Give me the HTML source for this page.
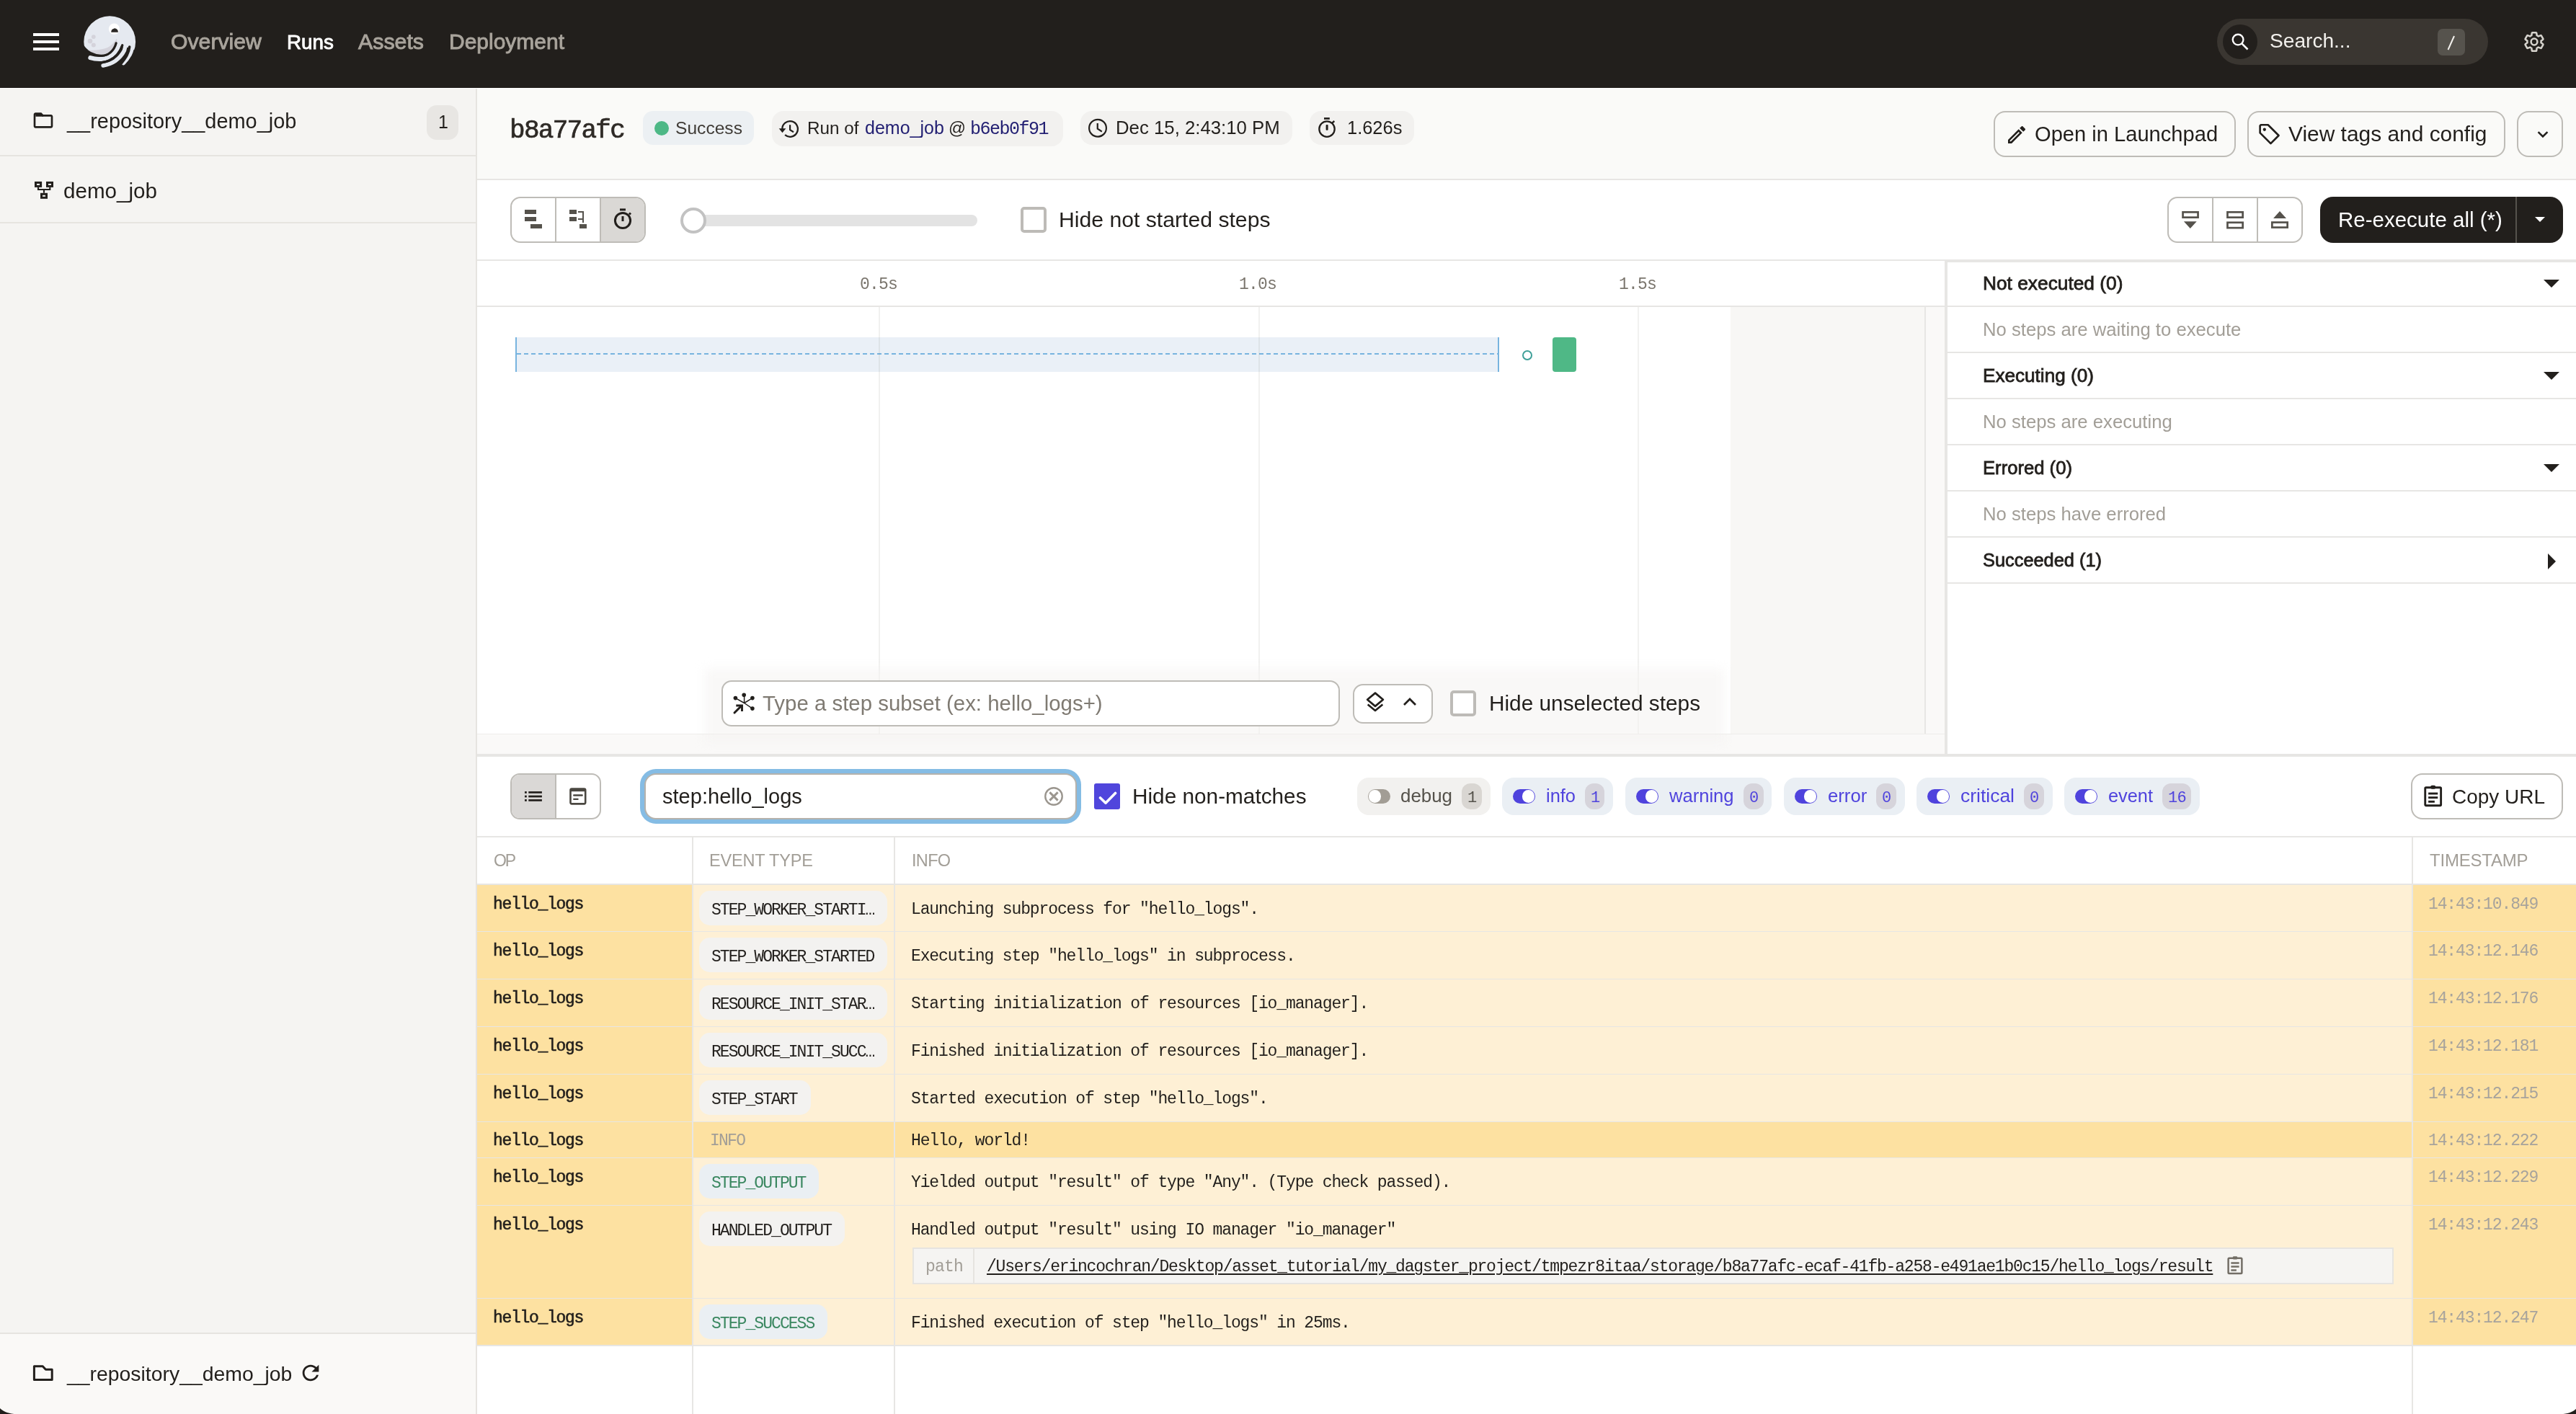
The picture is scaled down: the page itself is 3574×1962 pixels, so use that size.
<!DOCTYPE html>
<html><head><meta charset="utf-8"><title>Dagster run</title>
<style>
html,body{margin:0;padding:0;}
body{width:3574px;height:1962px;position:relative;overflow:hidden;background:#FFFFFF;font-family:"Liberation Sans", sans-serif;}
.t{position:absolute;white-space:nowrap;will-change:transform;}
.r{position:absolute;display:block;}
</style></head><body>
<div class="r" style="left:0px;top:0px;width:3574px;height:122px;background:#221F1C;"></div>
<div class="r" style="left:0px;top:122px;width:3574px;height:1px;background:#FFFFFF;"></div>
<div class="r" style="left:46px;top:46px;width:36px;height:4px;background:#FFFFFF;"></div>
<div class="r" style="left:46px;top:56px;width:36px;height:4px;background:#FFFFFF;"></div>
<div class="r" style="left:46px;top:66px;width:36px;height:4px;background:#FFFFFF;"></div>
<svg class="r" style="left:110px;top:15px;" width="85" height="85" viewBox="110 15 85 85">
<circle cx="152.2" cy="58.1" r="35.9" fill="#E5E9F0"/>
<path d="M105,63 L116.5,63 C121,70 129,74.4 139.8,75.6 C150,76.2 157.6,69 159.5,59 L168,64 L178,66 L188,70 L200,70 L200,100 L105,100 Z" fill="#221F1C"/>
<path d="M121,69 C128,70.5 140,69.5 148,66.5 C154,64 158.5,59 162,53.5 L163,62 C160,72 150,78 139,77.5 C130,77 124,73 121,70 Z" fill="#D4D3DB"/>
<path d="M125.3,80.2 C130,81.8 135,82.3 141,82 C150,81.5 156,77 160,72 C164,67 166,60 166.5,55" stroke="#E5E9F0" stroke-width="6" fill="none" stroke-linecap="round"/>
<path d="M143.1,91 C149,90 155,88 160,84.5 C166,80 170,75 172.5,70 C174,66 175,60 175,55" stroke="#E5E9F0" stroke-width="5.5" fill="none" stroke-linecap="round"/>
<path d="M171.3,87.6 C174.5,84.5 177.5,80.5 180,76 C182.5,71 184,66 184.5,58" stroke="#E5E9F0" stroke-width="5.6" fill="none" stroke-linecap="round"/>
<path d="M113,63.5 C120,71.5 128,76.6 139.8,77.3 C150,77.9 158.5,70 161.1,59.8" stroke="#221F1C" stroke-width="3.2" fill="none" stroke-linecap="round"/>
<path d="M128,88.5 C136,87.8 145,86.5 151,84 C160,80.5 166,74 169.8,62.8" stroke="#221F1C" stroke-width="3.3" fill="none" stroke-linecap="round"/>
<path d="M165,92 C170,86 174,81 176,77 C178.3,72.5 179.5,68 179.7,64.9" stroke="#221F1C" stroke-width="3.5" fill="none" stroke-linecap="round"/>
<circle cx="129.8" cy="51.1" r="2.9" fill="#D4D3DB"/><circle cx="125" cy="57.1" r="3.3" fill="#D4D3DB"/><circle cx="129.8" cy="62.5" r="3" fill="#D4D3DB"/>
<circle cx="158.4" cy="40.1" r="7.6" fill="#FFFFFF"/>
<path d="M154.3,44.8 A4.8,4.8 0 1,1 163.8,44.8 Z" fill="#2A2725"/>
<circle cx="156.4" cy="38.8" r="1.5" fill="#FFFFFF"/>
</svg>
<div class="t " style="left:237.00px;top:41.00px;font-size:30.22px;line-height:33px;font-family:'Liberation Sans', sans-serif;font-weight:normal;color:#A9A49C;-webkit-text-stroke:0.9px #A9A49C;">Overview</div>
<div class="t " style="left:398.00px;top:43.00px;font-size:27.84px;line-height:31px;font-family:'Liberation Sans', sans-serif;font-weight:normal;color:#FFFFFF;-webkit-text-stroke:0.9px #FFFFFF;">Runs</div>
<div class="t " style="left:497.00px;top:41.00px;font-size:30.33px;line-height:33px;font-family:'Liberation Sans', sans-serif;font-weight:normal;color:#A9A49C;-webkit-text-stroke:0.9px #A9A49C;">Assets</div>
<div class="t " style="left:623.00px;top:41.00px;font-size:29.99px;line-height:33px;font-family:'Liberation Sans', sans-serif;font-weight:normal;color:#A9A49C;-webkit-text-stroke:0.9px #A9A49C;">Deployment</div>
<div class="r" style="left:3076px;top:26px;width:376px;height:64px;background:#3A3631;border-radius:32px;"></div>
<div class="r" style="left:3084px;top:34px;width:48px;height:48px;background:#221F1C;border-radius:24px;"></div>
<svg class="r" style="left:3094px;top:44px;" width="28" height="28" viewBox="0 0 24 24"><circle cx="9.5" cy="9.5" r="6.3" stroke="#FFF" stroke-width="2" fill="none"/><path d="M14 14 L21 21" stroke="#FFF" stroke-width="2.2"/></svg>
<div class="t " style="left:3149.00px;top:41.00px;font-size:28.11px;line-height:31px;font-family:'Liberation Sans', sans-serif;font-weight:normal;color:#F2F0EC;">Search...</div>
<div class="r" style="left:3382px;top:40px;width:38px;height:37px;background:#56534D;border-radius:7px;"></div>
<svg class="r" style="left:3390px;top:45px;" width="20" height="30" viewBox="3390 45 20 30"><path d="M3405,50 L3396.5,69" stroke="#F2F0EC" stroke-width="2"/></svg>
<svg class="r" style="left:3500px;top:42px;" width="32" height="32" viewBox="0 0 24 24"><path fill="none" stroke="#D6D3CD" stroke-width="1.9" d="M19.14,12.94c0.04-0.3,0.06-0.61,0.06-0.94c0-0.32-0.02-0.64-0.07-0.94l2.03-1.58c0.18-0.14,0.23-0.41,0.12-0.61 l-1.92-3.32c-0.12-0.22-0.37-0.29-0.59-0.22l-2.39,0.96c-0.5-0.38-1.03-0.7-1.62-0.94L14.4,2.81c-0.04-0.24-0.24-0.41-0.48-0.41 h-3.84c-0.24,0-0.43,0.17-0.47,0.41L9.25,5.35C8.66,5.59,8.12,5.92,7.63,6.29L5.24,5.33c-0.22-0.08-0.47,0-0.59,0.22L2.74,8.87 C2.62,9.08,2.66,9.34,2.86,9.48l2.03,1.58C4.84,11.36,4.8,11.69,4.8,12s0.02,0.64,0.07,0.94l-2.03,1.58 c-0.18,0.14-0.23,0.41-0.12,0.61l1.92,3.32c0.12,0.22,0.37,0.29,0.59,0.22l2.39-0.96c0.5,0.38,1.03,0.7,1.62,0.94l0.36,2.54 c0.05,0.24,0.24,0.41,0.48,0.41h3.84c0.24,0,0.44-0.17,0.47-0.41l0.36-2.54c0.59-0.24,1.13-0.56,1.62-0.94l2.39,0.96 c0.22,0.08,0.47,0,0.59-0.22l1.92-3.32c0.12-0.22,0.07-0.47-0.12-0.61L19.14,12.94z"/><circle cx="12" cy="12" r="3.3" fill="none" stroke="#D6D3CD" stroke-width="1.9"/></svg>
<div class="r" style="left:0px;top:123px;width:660px;height:1839px;background:#F5F4F2;"></div>
<div class="r" style="left:660px;top:123px;width:2px;height:1839px;background:#E6E4E0;"></div>
<svg class="r" style="left:43.5px;top:151px;" width="32" height="32" viewBox="0 0 24 24"><path fill="#221F1C" d="M9.17 6l2 2H20v10H4V6h5.17M10 4H4c-1.1 0-1.99.9-1.99 2L2 18c0 1.1.9 2 2 2h16c1.1 0 2-.9 2-2V8c0-1.1-.9-2-2-2h-8l-2-2z"/><path fill="#221F1C" d="M4 5h6l2 2v1H4z"/></svg>
<div class="t " style="left:92.50px;top:152.00px;font-size:28.93px;line-height:32px;font-family:'Liberation Sans', sans-serif;font-weight:normal;color:#221F1C;">__repository__demo_job</div>
<div class="r" style="left:592px;top:146px;width:44px;height:48px;background:#E8E6E3;border-radius:14px;"></div>
<div class="t " style="left:608.00px;top:155.00px;font-size:25px;line-height:28px;font-family:'Liberation Sans', sans-serif;font-weight:normal;color:#221F1C;">1</div>
<div class="r" style="left:0px;top:215px;width:660px;height:2px;background:#E6E4E0;"></div>
<svg class="r" style="left:44px;top:248px;" width="34" height="32" viewBox="44 248 34 32"><g fill="none" stroke="#221F1C"><rect x="49.5" y="253.4" width="7.1" height="5" stroke-width="3"/><rect x="65.5" y="253.4" width="7" height="5" stroke-width="3"/><rect x="57.5" y="269.3" width="7" height="5" stroke-width="3"/><path d="M53,259.9 V263 H69.3 V259.9 M61,263 V267.8" stroke-width="2.1"/></g></svg>
<div class="t " style="left:88.00px;top:248.00px;font-size:29.6px;line-height:33px;font-family:'Liberation Sans', sans-serif;font-weight:normal;color:#221F1C;">demo_job</div>
<div class="r" style="left:0px;top:308px;width:660px;height:2px;background:#E6E4E0;"></div>
<div class="r" style="left:0px;top:1850px;width:660px;height:112px;background:#FAF9F7;"></div>
<div class="r" style="left:0px;top:1849px;width:660px;height:2px;background:#E6E4E0;"></div>
<svg class="r" style="left:40px;top:1888px;" width="40" height="34" viewBox="40 1888 40 34"><path d="M47.4,1895.7 H59.2 L63.4,1900.2 H72.2 V1914.4 H47.4 Z" fill="none" stroke="#221F1C" stroke-width="3" stroke-linejoin="round"/></svg>
<div class="t " style="left:92.50px;top:1890.00px;font-size:28.39px;line-height:32px;font-family:'Liberation Sans', sans-serif;font-weight:normal;color:#221F1C;">__repository__demo_job</div>
<svg class="r" style="left:414px;top:1888px;" width="34" height="34" viewBox="0 0 24 24"><path fill="#221F1C" d="M17.65 6.35C16.2 4.9 14.21 4 12 4c-4.42 0-7.99 3.58-7.99 8s3.57 8 7.99 8c3.73 0 6.84-2.55 7.73-6h-2.08c-.82 2.33-3.04 4-5.65 4-3.31 0-6-2.69-6-6s2.69-6 6-6c1.66 0 3.14.69 4.22 1.78L13 11h7V4l-2.35 2.35z"/></svg>
<div class="r" style="left:662px;top:123px;width:2912px;height:125px;background:#FAFAF8;"></div>
<div class="r" style="left:662px;top:248px;width:2912px;height:2px;background:#E7E6E4;"></div>
<div class="t " style="left:707.00px;top:161.00px;font-size:36px;line-height:41px;font-family:'Liberation Mono', monospace;font-weight:normal;color:#2E2A26;letter-spacing:-1.72px;-webkit-text-stroke:0.7px #2E2A26;">b8a77afc</div>
<div class="r" style="left:892px;top:154px;width:154px;height:47px;background:#ECF0F3;border-radius:14px;"></div>
<div class="r" style="left:908px;top:168px;width:20px;height:20px;background:#4DB886;border-radius:10px;"></div>
<div class="t " style="left:937.00px;top:164.00px;font-size:24.6px;line-height:27px;font-family:'Liberation Sans', sans-serif;font-weight:normal;color:#3F3B36;">Success</div>
<div class="r" style="left:1071px;top:154px;width:404px;height:49px;background:#F2F1EF;border-radius:16px;"></div>
<svg class="r" style="left:1076px;top:160px;" width="36" height="36" viewBox="1076 160 36 36"><path d="M1085.3,178.9 A10.8,10.8 0 1 1 1089.1,187.2" fill="none" stroke="#221F1C" stroke-width="2.3"/><path d="M1080.7,178.3 L1090.4,178.3 L1085.5,184.2 Z" fill="#221F1C"/><path d="M1096.1,173.3 V180.2 L1101,183.2" fill="none" stroke="#221F1C" stroke-width="2.2"/></svg>
<div class="t " style="left:1120.00px;top:164.00px;font-size:24.26px;line-height:27px;font-family:'Liberation Sans', sans-serif;font-weight:normal;color:#221F1C;">Run of</div>
<div class="t " style="left:1200.00px;top:163.00px;font-size:25.04px;line-height:28px;font-family:'Liberation Sans', sans-serif;font-weight:normal;color:#221F72;">demo_job</div>
<div class="t " style="left:1316.00px;top:165.00px;font-size:23.65px;line-height:26px;font-family:'Liberation Sans', sans-serif;font-weight:normal;color:#221F1C;">@</div>
<div class="t " style="left:1346.00px;top:165.00px;font-size:25px;line-height:29px;font-family:'Liberation Mono', monospace;font-weight:normal;color:#221F72;letter-spacing:-1.5px;">b6eb0f91</div>
<div class="r" style="left:1499px;top:154px;width:294px;height:47px;background:#F2F1EF;border-radius:16px;"></div>
<svg class="r" style="left:1506px;top:161px;" width="34" height="34" viewBox="1506 161 34 34"><circle cx="1523" cy="177.7" r="11.9" fill="none" stroke="#221F1C" stroke-width="2.2"/><path d="M1522.75,171 V178.6 L1528.8,182.6" fill="none" stroke="#221F1C" stroke-width="2.2"/></svg>
<div class="t " style="left:1548.00px;top:163.00px;font-size:25.77px;line-height:28px;font-family:'Liberation Sans', sans-serif;font-weight:normal;color:#221F1C;">Dec 15, 2:43:10 PM</div>
<div class="r" style="left:1817px;top:154px;width:145px;height:47px;background:#F2F1EF;border-radius:16px;"></div>
<svg class="r" style="left:1826px;top:160px;" width="30" height="34" viewBox="1826 160 30 34"><circle cx="1841" cy="179.1" r="10.7" fill="none" stroke="#221F1C" stroke-width="2.3"/><rect x="1837" y="163.1" width="7.8" height="2.7" fill="#221F1C"/><rect x="1839.6" y="173.1" width="3" height="7.7" rx="1" fill="#221F1C"/><path d="M1848.3,170.6 L1851.3,168" stroke="#221F1C" stroke-width="2.4"/></svg>
<div class="t " style="left:1869.00px;top:163.00px;font-size:25.45px;line-height:28px;font-family:'Liberation Sans', sans-serif;font-weight:normal;color:#221F1C;">1.626s</div>
<div class="r" style="left:2766px;top:154px;width:336px;height:64px;background:#FFFFFF;border:2px solid #BEBCB7;box-sizing:border-box;border-radius:16px;background:transparent;"></div>
<svg class="r" style="left:2782px;top:171px;" width="32" height="32" viewBox="0 0 24 24"><path fill="#221F1C" d="M3 17.25V21h3.75L17.81 9.94l-3.75-3.75L3 17.25zM5.92 19H5v-.92l9.06-9.06.92.92L5.92 19zM20.71 5.63l-2.34-2.34c-.2-.2-.45-.29-.71-.29s-.51.1-.7.29l-1.83 1.83 3.75 3.75 1.83-1.83c.39-.39.39-1.02 0-1.41z"/></svg>
<div class="t " style="left:2822.50px;top:170.00px;font-size:29.12px;line-height:32px;font-family:'Liberation Sans', sans-serif;font-weight:normal;color:#221F1C;">Open in Launchpad</div>
<div class="r" style="left:3118px;top:154px;width:358px;height:64px;border:2px solid #BEBCB7;box-sizing:border-box;border-radius:16px;"></div>
<svg class="r" style="left:3131px;top:168px;" width="37" height="37" viewBox="0 0 24 24"><g fill="none" stroke="#221F1C" stroke-width="1.7" stroke-linejoin="round"><path d="M3 4.2V10.6L12.6 20.2L19.8 13L10.2 3.4H3.8Z"/></g><circle cx="7" cy="7.6" r="1.4" fill="#221F1C"/></svg>
<div class="t " style="left:3175.00px;top:169.00px;font-size:29.92px;line-height:33px;font-family:'Liberation Sans', sans-serif;font-weight:normal;color:#221F1C;">View tags and config</div>
<div class="r" style="left:3492px;top:154px;width:64px;height:64px;border:2px solid #BEBCB7;box-sizing:border-box;border-radius:16px;"></div>
<svg class="r" style="left:3514px;top:172px;" width="28" height="28" viewBox="0 0 24 24"><path d="M6.5 9.5L12 15L17.5 9.5" fill="none" stroke="#221F1C" stroke-width="2.2"/></svg>
<div class="r" style="left:662px;top:250px;width:2912px;height:110px;background:#FFFFFF;"></div>
<div class="r" style="left:662px;top:360px;width:2912px;height:2px;background:#E7E6E4;"></div>
<div class="r" style="left:708px;top:273px;width:188px;height:64px;border:2px solid #BEBCB7;box-sizing:border-box;border-radius:14px;"></div>
<div class="r" style="left:833px;top:275px;width:61px;height:60px;background:#DAD8D5;border-radius:0 12px 12px 0;"></div>
<div class="r" style="left:770px;top:275px;width:2px;height:60px;background:#BEBCB7;"></div>
<div class="r" style="left:832px;top:275px;width:2px;height:60px;background:#BEBCB7;"></div>
<div class="r" style="left:728px;top:291px;width:16px;height:6px;background:#55524C;"></div>
<div class="r" style="left:728px;top:301px;width:16px;height:6px;background:#55524C;"></div>
<div class="r" style="left:736px;top:311px;width:16px;height:6px;background:#55524C;"></div>
<div class="r" style="left:790px;top:291px;width:10px;height:6px;background:#55524C;"></div>
<div class="r" style="left:790px;top:301px;width:10px;height:6px;background:#55524C;"></div>
<div class="r" style="left:804px;top:311px;width:10px;height:6px;background:#55524C;"></div>
<svg class="r" style="left:800px;top:290px;" width="14" height="22" viewBox="0 0 14 22"><path d="M2 4H9V19M2 14H9" fill="none" stroke="#55524C" stroke-width="2"/></svg>
<svg class="r" style="left:850px;top:288px;" width="30" height="32" viewBox="0 0 30 32"><g fill="none" stroke="#221F1C" stroke-width="3"><circle cx="14" cy="18" r="10.6"/><path d="M10 2.9H18"/><path d="M14 12V19"/><path d="M23 9.5L25 7.5"/></g></svg>
<div class="r" style="left:947px;top:298px;width:409px;height:16px;background:#E3E3E3;border-radius:8px;"></div>
<div class="r" style="left:944px;top:288px;width:36px;height:36px;background:#FFFFFF;border:4px solid #C2C2C2;box-sizing:border-box;border-radius:18px;"></div>
<div class="r" style="left:1416px;top:287px;width:36px;height:36px;background:#FFFFFF;border:4px solid #BDBBB7;box-sizing:border-box;border-radius:5px;"></div>
<div class="t " style="left:1469.00px;top:288.00px;font-size:30.18px;line-height:33px;font-family:'Liberation Sans', sans-serif;font-weight:normal;color:#221F1C;">Hide not started steps</div>
<div class="r" style="left:3007px;top:273px;width:188px;height:64px;border:2px solid #BEBCB7;box-sizing:border-box;border-radius:14px;"></div>
<div class="r" style="left:3069px;top:275px;width:2px;height:60px;background:#BEBCB7;"></div>
<div class="r" style="left:3131px;top:275px;width:2px;height:60px;background:#BEBCB7;"></div>
<svg class="r" style="left:3020px;top:285px;" width="165" height="40" viewBox="3020 285 165 40"><g fill="none" stroke="#55524C" stroke-width="2.7"><rect x="3028.55" y="294.35" width="21" height="7.3"/><rect x="3090.45" y="294.35" width="21.2" height="7.3"/><rect x="3090.45" y="308.75" width="21.2" height="7.4"/><rect x="3152.35" y="308.55" width="21.3" height="7.0"/></g><path d="M3029.9,307.2 H3047.7 L3038.8,316.9 Z M3154.1,303 H3172 L3163,293 Z" fill="#55524C"/></svg>
<div class="r" style="left:3219px;top:273px;width:337px;height:64px;background:#221F1C;border-radius:18px;"></div>
<div class="r" style="left:3490px;top:273px;width:2px;height:64px;background:#55524C;"></div>
<div class="t " style="left:3244.00px;top:288.00px;font-size:29.51px;line-height:33px;font-family:'Liberation Sans', sans-serif;font-weight:normal;color:#FFFFFF;">Re-execute all (*)</div>
<svg class="r" style="left:3514px;top:298px;" width="20" height="14" viewBox="0 0 20 14"><path d="M3 3H17L10 10Z" fill="#FFFFFF"/></svg>
<div class="r" style="left:662px;top:362px;width:2036px;height:657px;background:#FFFFFF;"></div>
<div class="r" style="left:662px;top:424px;width:2036px;height:2px;background:#E7E6E4;"></div>
<div class="t " style="left:1193.00px;top:382.00px;font-size:23px;line-height:26px;font-family:'Liberation Mono', monospace;font-weight:normal;color:#7A756D;letter-spacing:-0.8px;">0.5s</div>
<div class="t " style="left:1719.00px;top:382.00px;font-size:23px;line-height:26px;font-family:'Liberation Mono', monospace;font-weight:normal;color:#7A756D;letter-spacing:-0.8px;">1.0s</div>
<div class="t " style="left:2246.00px;top:382.00px;font-size:23px;line-height:26px;font-family:'Liberation Mono', monospace;font-weight:normal;color:#7A756D;letter-spacing:-0.8px;">1.5s</div>
<div class="r" style="left:2401px;top:426px;width:270px;height:593px;background:#F8F7F5;"></div>
<div class="r" style="left:2670px;top:426px;width:2px;height:593px;background:#E7E6E4;"></div>
<div class="r" style="left:2672px;top:426px;width:26px;height:593px;background:#FAF9F8;"></div>
<div class="r" style="left:662px;top:1018px;width:2036px;height:1px;background:#EEEDEB;"></div>
<div class="r" style="left:662px;top:1019px;width:2036px;height:27px;background:#FAF9F8;"></div>
<div class="r" style="left:715px;top:468px;width:1365px;height:48px;background:#EAF0F7;"></div>
<div class="r" style="left:715px;top:468px;width:2px;height:48px;background:#78B4DF;"></div>
<div class="r" style="left:2078px;top:468px;width:2px;height:48px;background:#78B4DF;"></div>
<div class="r" style="left:717px;top:490px;width:1361px;height:2px;background:repeating-linear-gradient(90deg,#78B4DF 0 6px,transparent 6px 10px);"></div>
<div class="r" style="left:2112px;top:486px;width:14px;height:14px;border:2.5px solid #3E9F98;box-sizing:border-box;border-radius:7px;"></div>
<div class="r" style="left:2154px;top:468px;width:33px;height:48px;background:#4FB886;border-radius:4px;"></div>
<div class="r" style="left:1219px;top:426px;width:1.5px;height:593px;background:rgba(60,50,40,0.07);"></div>
<div class="r" style="left:1746px;top:426px;width:1.5px;height:593px;background:rgba(60,50,40,0.07);"></div>
<div class="r" style="left:2272px;top:426px;width:1.5px;height:593px;background:rgba(60,50,40,0.07);"></div>
<div class="r" style="left:978px;top:928px;width:1414px;height:102px;background:rgba(244,243,240,0.55);filter:blur(7px);"></div>
<div class="r" style="left:662px;top:1018px;width:2036px;height:1px;background:#EEEDEB;"></div>
<div class="r" style="left:1001px;top:944px;width:858px;height:64px;background:#FFFFFF;border:2px solid #BEBCB7;box-sizing:border-box;border-radius:14px;"></div>
<svg class="r" style="left:1010px;top:955px;" width="45" height="45" viewBox="1010 955 45 45"><g stroke="#221F1C" stroke-width="1.5" fill="none"><path d="M1032.6,975.5 V964.3 M1032.6,975.5 L1020.4,968.6 M1032.6,975.5 L1043.9,968.6 M1032.6,975.5 L1043.9,983.1"/></g><g fill="#221F1C"><circle cx="1032.2" cy="964.3" r="2.8"/><circle cx="1020.4" cy="968.6" r="2.8"/><circle cx="1043.9" cy="968.6" r="2.8"/><circle cx="1043.9" cy="983.1" r="2.8"/></g><path d="M1019,989 L1028.3,979.7" stroke="#221F1C" stroke-width="3" stroke-linecap="round"/><path d="M1021.3,979 H1029.5 V987" fill="none" stroke="#221F1C" stroke-width="2.9"/></svg>
<div class="t " style="left:1058.00px;top:959.00px;font-size:29.41px;line-height:33px;font-family:'Liberation Sans', sans-serif;font-weight:normal;color:#7F7A72;">Type a step subset (ex: hello_logs+)</div>
<div class="r" style="left:1877px;top:949px;width:111px;height:55px;background:#FFFFFF;border:2px solid #BEBCB7;box-sizing:border-box;border-radius:14px;"></div>
<svg class="r" style="left:1893px;top:958px;" width="30" height="34" viewBox="0 0 24 28"><path d="M12 3L21 10.5L12 18L3 10.5Z" fill="none" stroke="#221F1C" stroke-width="2.2" stroke-linejoin="round"/><path d="M3.5 16L12 23L20.5 16" fill="none" stroke="#221F1C" stroke-width="2.2" stroke-linejoin="round"/></svg>
<svg class="r" style="left:1944px;top:964px;" width="24" height="20" viewBox="0 0 24 20"><path d="M4 14L12 6L20 14" fill="none" stroke="#221F1C" stroke-width="2.8"/></svg>
<div class="r" style="left:2012px;top:958px;width:36px;height:36px;background:#FFFFFF;border:4px solid #BDBBB7;box-sizing:border-box;border-radius:5px;"></div>
<div class="t " style="left:2065.50px;top:959.00px;font-size:29.79px;line-height:33px;font-family:'Liberation Sans', sans-serif;font-weight:normal;color:#221F1C;">Hide unselected steps</div>
<div class="r" style="left:2698px;top:362px;width:876px;height:684px;background:#FFFFFF;"></div>
<div class="r" style="left:2698px;top:362px;width:4px;height:684px;background:#E7E6E4;"></div>
<div class="r" style="left:2698px;top:361px;width:876px;height:3px;background:#E7E6E4;"></div>
<div class="t " style="left:2750.50px;top:378.00px;font-size:26.31px;line-height:30px;font-family:'Liberation Sans', sans-serif;font-weight:normal;color:#221F1C;-webkit-text-stroke:0.8px #221F1C;">Not executed (0)</div>
<svg class="r" style="left:3526px;top:384px;" width="28" height="20" viewBox="0 0 28 20"><path d="M3 4H25L14 15Z" fill="#221F1C"/></svg>
<div class="r" style="left:2702px;top:424px;width:872px;height:2px;background:#E7E6E4;"></div>
<div class="t " style="left:2750.50px;top:443.00px;font-size:25.7px;line-height:28px;font-family:'Liberation Sans', sans-serif;font-weight:normal;color:#A29E97;">No steps are waiting to execute</div>
<div class="r" style="left:2702px;top:488px;width:872px;height:2px;background:#E7E6E4;"></div>
<div class="t " style="left:2750.50px;top:506.00px;font-size:26.13px;line-height:30px;font-family:'Liberation Sans', sans-serif;font-weight:normal;color:#221F1C;-webkit-text-stroke:0.8px #221F1C;">Executing (0)</div>
<svg class="r" style="left:3526px;top:512px;" width="28" height="20" viewBox="0 0 28 20"><path d="M3 4H25L14 15Z" fill="#221F1C"/></svg>
<div class="r" style="left:2702px;top:552px;width:872px;height:2px;background:#E7E6E4;"></div>
<div class="t " style="left:2750.50px;top:571.00px;font-size:25.7px;line-height:28px;font-family:'Liberation Sans', sans-serif;font-weight:normal;color:#A29E97;">No steps are executing</div>
<div class="r" style="left:2702px;top:616px;width:872px;height:2px;background:#E7E6E4;"></div>
<div class="t " style="left:2750.50px;top:635.00px;font-size:25.65px;line-height:28px;font-family:'Liberation Sans', sans-serif;font-weight:normal;color:#221F1C;-webkit-text-stroke:0.8px #221F1C;">Errored (0)</div>
<svg class="r" style="left:3526px;top:640px;" width="28" height="20" viewBox="0 0 28 20"><path d="M3 4H25L14 15Z" fill="#221F1C"/></svg>
<div class="r" style="left:2702px;top:680px;width:872px;height:2px;background:#E7E6E4;"></div>
<div class="t " style="left:2750.50px;top:699.00px;font-size:25.7px;line-height:28px;font-family:'Liberation Sans', sans-serif;font-weight:normal;color:#A29E97;">No steps have errored</div>
<div class="r" style="left:2702px;top:744px;width:872px;height:2px;background:#E7E6E4;"></div>
<div class="t " style="left:2750.50px;top:763.00px;font-size:25.37px;line-height:28px;font-family:'Liberation Sans', sans-serif;font-weight:normal;color:#221F1C;-webkit-text-stroke:0.8px #221F1C;">Succeeded (1)</div>
<svg class="r" style="left:3530px;top:765px;" width="20" height="28" viewBox="0 0 20 28"><path d="M5 3V25L16 14Z" fill="#221F1C"/></svg>
<div class="r" style="left:2702px;top:808px;width:872px;height:2px;background:#E7E6E4;"></div>
<div class="r" style="left:662px;top:1046px;width:2912px;height:4px;background:#E7E6E4;"></div>
<div class="r" style="left:662px;top:1050px;width:2912px;height:110px;background:#FFFFFF;"></div>
<div class="r" style="left:708px;top:1073px;width:126px;height:64px;border:2px solid #BEBCB7;box-sizing:border-box;border-radius:13px;"></div>
<div class="r" style="left:710px;top:1075px;width:61px;height:60px;background:#DAD8D6;border-radius:11px 0 0 11px;"></div>
<div class="r" style="left:770px;top:1075px;width:2px;height:60px;background:#BEBCB7;"></div>
<svg class="r" style="left:720px;top:1085px;" width="100" height="40" viewBox="720 1085 100 40"><g fill="#221F1C"><rect x="728" y="1098.1" width="2.8" height="2.7"/><rect x="733.3" y="1098.1" width="18.6" height="2.7"/><rect x="728" y="1103.7" width="2.8" height="2.7"/><rect x="733.3" y="1103.7" width="18.6" height="2.7"/><rect x="728" y="1109.1" width="2.8" height="2.7"/><rect x="733.3" y="1109.1" width="18.6" height="2.7"/></g><rect x="791.5" y="1094.5" width="20.7" height="20.9" rx="1.8" fill="none" stroke="#4A4740" stroke-width="2.6"/><rect x="791" y="1094" width="21.7" height="4.2" fill="#4A4740"/><rect x="795.1" y="1102.3" width="13.7" height="2.4" rx="1" fill="#4A4740"/><rect x="795.1" y="1107.7" width="7.6" height="2.3" rx="1" fill="#4A4740"/></svg>
<div class="r" style="left:888px;top:1067px;width:612px;height:76px;background:#85BCE4;border-radius:22px;"></div>
<div class="r" style="left:894px;top:1073px;width:600px;height:64px;background:#FFFFFF;border:2px solid #B5B2AC;box-sizing:border-box;border-radius:16px;"></div>
<div class="t " style="left:919.00px;top:1089.00px;font-size:29.07px;line-height:32px;font-family:'Liberation Sans', sans-serif;font-weight:normal;color:#221F1C;">step:hello_logs</div>
<svg class="r" style="left:1447px;top:1090px;" width="30" height="30" viewBox="0 0 24 24"><circle cx="12" cy="12" r="9.4" fill="none" stroke="#9B968F" stroke-width="1.9"/><path d="M7.5 7.5L16.5 16.5M16.5 7.5L7.5 16.5" stroke="#9B968F" stroke-width="2.3"/></svg>
<div class="r" style="left:1518px;top:1087px;width:36px;height:36px;background:#5046DC;border-radius:3px;"></div>
<svg class="r" style="left:1518px;top:1087px;" width="36" height="36" viewBox="0 0 36 36"><path d="M8.5 20L16 27.2L29.5 13.5" fill="none" stroke="#FFFFFF" stroke-width="3.6" stroke-linecap="round" stroke-linejoin="round"/></svg>
<div class="t " style="left:1571.40px;top:1088.00px;font-size:29.77px;line-height:33px;font-family:'Liberation Sans', sans-serif;font-weight:normal;color:#221F1C;">Hide non-matches</div>
<div class="r" style="left:1883px;top:1079px;width:185px;height:52px;background:#F2F1EF;border-radius:16px;"></div>
<div class="r" style="left:1897.5px;top:1095px;width:31.0px;height:20px;background:#A29D95;border-radius:10px;"></div>
<div class="r" style="left:1898.5px;top:1096px;width:17.0px;height:18px;background:#FFFFFF;border-radius:9px;"></div>
<div class="t " style="left:1943.00px;top:1090.00px;font-size:25.9px;line-height:28px;font-family:'Liberation Sans', sans-serif;font-weight:normal;color:#55524B;">debug</div>
<div class="r" style="left:2028px;top:1087px;width:28px;height:36px;background:#D9D6D2;border-radius:12px;"></div>
<div class="t " style="left:2036.25px;top:1095.00px;font-size:22px;line-height:25px;font-family:'Liberation Mono', monospace;font-weight:normal;color:#55524B;letter-spacing:-0.7px;">1</div>
<div class="r" style="left:2084px;top:1079px;width:154px;height:52px;background:#EAEFF4;border-radius:16px;"></div>
<div class="r" style="left:2098.5px;top:1095px;width:31.0px;height:20px;background:#4F43DD;border-radius:10px;"></div>
<div class="r" style="left:2111.5px;top:1096px;width:17.0px;height:18px;background:#FFFFFF;border-radius:9px;"></div>
<div class="t " style="left:2144.50px;top:1090.00px;font-size:25.43px;line-height:28px;font-family:'Liberation Sans', sans-serif;font-weight:normal;color:#4F43DD;">info</div>
<div class="r" style="left:2199px;top:1087px;width:27px;height:36px;background:#D6D4DB;border-radius:12px;"></div>
<div class="t " style="left:2206.75px;top:1095.00px;font-size:22px;line-height:25px;font-family:'Liberation Mono', monospace;font-weight:normal;color:#4F43DD;letter-spacing:-0.7px;">1</div>
<div class="r" style="left:2255px;top:1079px;width:203px;height:52px;background:#EAEFF4;border-radius:16px;"></div>
<div class="r" style="left:2269.5px;top:1095px;width:31.0px;height:20px;background:#4F43DD;border-radius:10px;"></div>
<div class="r" style="left:2282.5px;top:1096px;width:17.0px;height:18px;background:#FFFFFF;border-radius:9px;"></div>
<div class="t " style="left:2316.25px;top:1090.00px;font-size:25.59px;line-height:28px;font-family:'Liberation Sans', sans-serif;font-weight:normal;color:#4F43DD;">warning</div>
<div class="r" style="left:2419px;top:1087px;width:28px;height:36px;background:#D6D4DB;border-radius:12px;"></div>
<div class="t " style="left:2427.25px;top:1095.00px;font-size:22px;line-height:25px;font-family:'Liberation Mono', monospace;font-weight:normal;color:#4F43DD;letter-spacing:-0.7px;">0</div>
<div class="r" style="left:2475px;top:1079px;width:168px;height:52px;background:#EAEFF4;border-radius:16px;"></div>
<div class="r" style="left:2489.5px;top:1095px;width:31.0px;height:20px;background:#4F43DD;border-radius:10px;"></div>
<div class="r" style="left:2502.5px;top:1096px;width:17.0px;height:18px;background:#FFFFFF;border-radius:9px;"></div>
<div class="t " style="left:2535.70px;top:1090.00px;font-size:25.7px;line-height:28px;font-family:'Liberation Sans', sans-serif;font-weight:normal;color:#4F43DD;">error</div>
<div class="r" style="left:2603px;top:1087px;width:28px;height:36px;background:#D6D4DB;border-radius:12px;"></div>
<div class="t " style="left:2611.25px;top:1095.00px;font-size:22px;line-height:25px;font-family:'Liberation Mono', monospace;font-weight:normal;color:#4F43DD;letter-spacing:-0.7px;">0</div>
<div class="r" style="left:2659px;top:1079px;width:189px;height:52px;background:#EAEFF4;border-radius:16px;"></div>
<div class="r" style="left:2673.5px;top:1095px;width:31.0px;height:20px;background:#4F43DD;border-radius:10px;"></div>
<div class="r" style="left:2686.5px;top:1096px;width:17.0px;height:18px;background:#FFFFFF;border-radius:9px;"></div>
<div class="t " style="left:2720.00px;top:1089.00px;font-size:26.48px;line-height:30px;font-family:'Liberation Sans', sans-serif;font-weight:normal;color:#4F43DD;">critical</div>
<div class="r" style="left:2808px;top:1087px;width:28px;height:36px;background:#D6D4DB;border-radius:12px;"></div>
<div class="t " style="left:2816.25px;top:1095.00px;font-size:22px;line-height:25px;font-family:'Liberation Mono', monospace;font-weight:normal;color:#4F43DD;letter-spacing:-0.7px;">0</div>
<div class="r" style="left:2864px;top:1079px;width:188px;height:52px;background:#EAEFF4;border-radius:16px;"></div>
<div class="r" style="left:2878.5px;top:1095px;width:31.0px;height:20px;background:#4F43DD;border-radius:10px;"></div>
<div class="r" style="left:2891.5px;top:1096px;width:17.0px;height:18px;background:#FFFFFF;border-radius:9px;"></div>
<div class="t " style="left:2925.00px;top:1090.00px;font-size:25.33px;line-height:28px;font-family:'Liberation Sans', sans-serif;font-weight:normal;color:#4F43DD;">event</div>
<div class="r" style="left:3000px;top:1087px;width:40px;height:36px;background:#D6D4DB;border-radius:12px;"></div>
<div class="t " style="left:3008.00px;top:1095.00px;font-size:22px;line-height:25px;font-family:'Liberation Mono', monospace;font-weight:normal;color:#4F43DD;letter-spacing:-0.7px;">16</div>
<div class="r" style="left:3345px;top:1073px;width:211px;height:64px;border:2px solid #BEBCB7;box-sizing:border-box;border-radius:16px;"></div>
<svg class="r" style="left:3361px;top:1087px;" width="30" height="34" viewBox="0 0 24 27"><g fill="none" stroke="#221F1C" stroke-width="2.3"><rect x="3" y="4.5" width="17.5" height="20" rx="1"/></g><rect x="9" y="2" width="5.5" height="4" rx="1.5" fill="#221F1C"/><g fill="#221F1C"><rect x="6.5" y="10" width="10.5" height="2.3"/><rect x="6.5" y="14.5" width="10.5" height="2.3"/><rect x="6.5" y="19" width="7" height="2.3"/></g></svg>
<div class="t " style="left:3401.80px;top:1090.00px;font-size:27.97px;line-height:31px;font-family:'Liberation Sans', sans-serif;font-weight:normal;color:#221F1C;">Copy URL</div>
<div class="r" style="left:662px;top:1160px;width:2912px;height:2px;background:#E7E6E4;"></div>
<div class="r" style="left:662px;top:1162px;width:2912px;height:800px;background:#FFFFFF;"></div>
<div class="t " style="left:685.00px;top:1181.00px;font-size:23px;line-height:26px;font-family:'Liberation Sans', sans-serif;font-weight:normal;color:#A29E97;letter-spacing:-2.25px;">OP</div>
<div class="t " style="left:984.40px;top:1181.00px;font-size:23.5px;line-height:26px;font-family:'Liberation Sans', sans-serif;font-weight:normal;color:#A29E97;letter-spacing:-0.156px;">EVENT TYPE</div>
<div class="t " style="left:1264.80px;top:1181.00px;font-size:23.5px;line-height:26px;font-family:'Liberation Sans', sans-serif;font-weight:normal;color:#A29E97;letter-spacing:-0.683px;">INFO</div>
<div class="t " style="left:3371.40px;top:1180.00px;font-size:24px;line-height:27px;font-family:'Liberation Sans', sans-serif;font-weight:normal;color:#A29E97;letter-spacing:-0.206px;">TIMESTAMP</div>
<div class="r" style="left:662px;top:1226px;width:2912px;height:2px;background:#E7E6E4;"></div>
<div class="r" style="left:662px;top:1228px;width:298px;height:65px;background:#FDE1A1;"></div>
<div class="r" style="left:962px;top:1228px;width:2384px;height:65px;background:#FEF0D5;"></div>
<div class="r" style="left:3348px;top:1228px;width:226px;height:65px;background:#FDE1A1;"></div>
<div class="r" style="left:662px;top:1292px;width:2912px;height:2px;background:#E7E6E4;"></div>
<div class="t " style="left:684.00px;top:1242.00px;font-size:23px;line-height:26px;font-family:'Liberation Mono', monospace;font-weight:normal;color:#221F1C;letter-spacing:-1.3px;-webkit-text-stroke:0.6px #221F1C;">hello_logs</div>
<div class="r" style="left:970px;top:1236px;width:261.3399999999999px;height:48px;background:#F3F2F0;border-radius:15px;"></div>
<div class="t " style="left:987.00px;top:1250.00px;font-size:23px;line-height:26px;font-family:'Liberation Mono', monospace;font-weight:normal;color:#221F1C;letter-spacing:-1.94px;">STEP_WORKER_STARTI…</div>
<div class="t " style="left:1264.00px;top:1249.00px;font-size:23px;line-height:26px;font-family:'Liberation Mono', monospace;font-weight:normal;color:#221F1C;letter-spacing:-1.12px;">Launching subprocess for "hello_logs".</div>
<div class="t " style="left:3369.00px;top:1242.00px;font-size:23px;line-height:26px;font-family:'Liberation Mono', monospace;font-weight:normal;color:#A7A39C;letter-spacing:-1.12px;">14:43:10.849</div>
<div class="r" style="left:662px;top:1293px;width:298px;height:66px;background:#FDE1A1;"></div>
<div class="r" style="left:962px;top:1293px;width:2384px;height:66px;background:#FEF0D5;"></div>
<div class="r" style="left:3348px;top:1293px;width:226px;height:66px;background:#FDE1A1;"></div>
<div class="r" style="left:662px;top:1358px;width:2912px;height:2px;background:#E7E6E4;"></div>
<div class="t " style="left:684.00px;top:1307.00px;font-size:23px;line-height:26px;font-family:'Liberation Mono', monospace;font-weight:normal;color:#221F1C;letter-spacing:-1.3px;-webkit-text-stroke:0.6px #221F1C;">hello_logs</div>
<div class="r" style="left:970px;top:1301px;width:261.3399999999999px;height:48px;background:#F3F2F0;border-radius:15px;"></div>
<div class="t " style="left:987.00px;top:1315.00px;font-size:23px;line-height:26px;font-family:'Liberation Mono', monospace;font-weight:normal;color:#221F1C;letter-spacing:-1.94px;">STEP_WORKER_STARTED</div>
<div class="t " style="left:1264.00px;top:1314.00px;font-size:23px;line-height:26px;font-family:'Liberation Mono', monospace;font-weight:normal;color:#221F1C;letter-spacing:-1.12px;">Executing step "hello_logs" in subprocess.</div>
<div class="t " style="left:3369.00px;top:1307.00px;font-size:23px;line-height:26px;font-family:'Liberation Mono', monospace;font-weight:normal;color:#A7A39C;letter-spacing:-1.12px;">14:43:12.146</div>
<div class="r" style="left:662px;top:1359px;width:298px;height:66px;background:#FDE1A1;"></div>
<div class="r" style="left:962px;top:1359px;width:2384px;height:66px;background:#FEF0D5;"></div>
<div class="r" style="left:3348px;top:1359px;width:226px;height:66px;background:#FDE1A1;"></div>
<div class="r" style="left:662px;top:1424px;width:2912px;height:2px;background:#E7E6E4;"></div>
<div class="t " style="left:684.00px;top:1373.00px;font-size:23px;line-height:26px;font-family:'Liberation Mono', monospace;font-weight:normal;color:#221F1C;letter-spacing:-1.3px;-webkit-text-stroke:0.6px #221F1C;">hello_logs</div>
<div class="r" style="left:970px;top:1367px;width:261.3399999999999px;height:48px;background:#F3F2F0;border-radius:15px;"></div>
<div class="t " style="left:987.00px;top:1381.00px;font-size:23px;line-height:26px;font-family:'Liberation Mono', monospace;font-weight:normal;color:#221F1C;letter-spacing:-1.94px;">RESOURCE_INIT_STAR…</div>
<div class="t " style="left:1264.00px;top:1380.00px;font-size:23px;line-height:26px;font-family:'Liberation Mono', monospace;font-weight:normal;color:#221F1C;letter-spacing:-1.12px;">Starting initialization of resources [io_manager].</div>
<div class="t " style="left:3369.00px;top:1373.00px;font-size:23px;line-height:26px;font-family:'Liberation Mono', monospace;font-weight:normal;color:#A7A39C;letter-spacing:-1.12px;">14:43:12.176</div>
<div class="r" style="left:662px;top:1425px;width:298px;height:66px;background:#FDE1A1;"></div>
<div class="r" style="left:962px;top:1425px;width:2384px;height:66px;background:#FEF0D5;"></div>
<div class="r" style="left:3348px;top:1425px;width:226px;height:66px;background:#FDE1A1;"></div>
<div class="r" style="left:662px;top:1490px;width:2912px;height:2px;background:#E7E6E4;"></div>
<div class="t " style="left:684.00px;top:1439.00px;font-size:23px;line-height:26px;font-family:'Liberation Mono', monospace;font-weight:normal;color:#221F1C;letter-spacing:-1.3px;-webkit-text-stroke:0.6px #221F1C;">hello_logs</div>
<div class="r" style="left:970px;top:1433px;width:261.3399999999999px;height:48px;background:#F3F2F0;border-radius:15px;"></div>
<div class="t " style="left:987.00px;top:1447.00px;font-size:23px;line-height:26px;font-family:'Liberation Mono', monospace;font-weight:normal;color:#221F1C;letter-spacing:-1.94px;">RESOURCE_INIT_SUCC…</div>
<div class="t " style="left:1264.00px;top:1446.00px;font-size:23px;line-height:26px;font-family:'Liberation Mono', monospace;font-weight:normal;color:#221F1C;letter-spacing:-1.12px;">Finished initialization of resources [io_manager].</div>
<div class="t " style="left:3369.00px;top:1439.00px;font-size:23px;line-height:26px;font-family:'Liberation Mono', monospace;font-weight:normal;color:#A7A39C;letter-spacing:-1.12px;">14:43:12.181</div>
<div class="r" style="left:662px;top:1491px;width:298px;height:66px;background:#FDE1A1;"></div>
<div class="r" style="left:962px;top:1491px;width:2384px;height:66px;background:#FEF0D5;"></div>
<div class="r" style="left:3348px;top:1491px;width:226px;height:66px;background:#FDE1A1;"></div>
<div class="r" style="left:662px;top:1556px;width:2912px;height:2px;background:#E7E6E4;"></div>
<div class="t " style="left:684.00px;top:1505.00px;font-size:23px;line-height:26px;font-family:'Liberation Mono', monospace;font-weight:normal;color:#221F1C;letter-spacing:-1.3px;-webkit-text-stroke:0.6px #221F1C;">hello_logs</div>
<div class="r" style="left:970px;top:1499px;width:154.5999999999999px;height:48px;background:#F3F2F0;border-radius:15px;"></div>
<div class="t " style="left:987.00px;top:1513.00px;font-size:23px;line-height:26px;font-family:'Liberation Mono', monospace;font-weight:normal;color:#221F1C;letter-spacing:-1.94px;">STEP_START</div>
<div class="t " style="left:1264.00px;top:1512.00px;font-size:23px;line-height:26px;font-family:'Liberation Mono', monospace;font-weight:normal;color:#221F1C;letter-spacing:-1.12px;">Started execution of step "hello_logs".</div>
<div class="t " style="left:3369.00px;top:1505.00px;font-size:23px;line-height:26px;font-family:'Liberation Mono', monospace;font-weight:normal;color:#A7A39C;letter-spacing:-1.12px;">14:43:12.215</div>
<div class="r" style="left:662px;top:1557px;width:298px;height:50px;background:#FDE1A1;"></div>
<div class="r" style="left:962px;top:1557px;width:2384px;height:50px;background:#FDE1A1;"></div>
<div class="r" style="left:3348px;top:1557px;width:226px;height:50px;background:#FDE1A1;"></div>
<div class="r" style="left:662px;top:1606px;width:2912px;height:2px;background:#E7E6E4;"></div>
<div class="t " style="left:684.00px;top:1570.00px;font-size:23px;line-height:26px;font-family:'Liberation Mono', monospace;font-weight:normal;color:#221F1C;letter-spacing:-1.3px;-webkit-text-stroke:0.6px #221F1C;">hello_logs</div>
<div class="t " style="left:985.00px;top:1570.00px;font-size:23px;line-height:26px;font-family:'Liberation Mono', monospace;font-weight:normal;color:#A29E97;letter-spacing:-1.75px;">INFO</div>
<div class="t " style="left:1264.00px;top:1570.00px;font-size:23px;line-height:26px;font-family:'Liberation Mono', monospace;font-weight:normal;color:#221F1C;letter-spacing:-1.12px;">Hello, world!</div>
<div class="t " style="left:3369.00px;top:1570.00px;font-size:23px;line-height:26px;font-family:'Liberation Mono', monospace;font-weight:normal;color:#A7A39C;letter-spacing:-1.12px;">14:43:12.222</div>
<div class="r" style="left:662px;top:1607px;width:298px;height:66px;background:#FDE1A1;"></div>
<div class="r" style="left:962px;top:1607px;width:2384px;height:66px;background:#FEF0D5;"></div>
<div class="r" style="left:3348px;top:1607px;width:226px;height:66px;background:#FDE1A1;"></div>
<div class="r" style="left:662px;top:1672px;width:2912px;height:2px;background:#E7E6E4;"></div>
<div class="t " style="left:684.00px;top:1621.00px;font-size:23px;line-height:26px;font-family:'Liberation Mono', monospace;font-weight:normal;color:#221F1C;letter-spacing:-1.3px;-webkit-text-stroke:0.6px #221F1C;">hello_logs</div>
<div class="r" style="left:970px;top:1615px;width:166.46000000000004px;height:48px;background:#EAEFF3;border-radius:15px;"></div>
<div class="t " style="left:987.00px;top:1629.00px;font-size:23px;line-height:26px;font-family:'Liberation Mono', monospace;font-weight:normal;color:#3A8760;letter-spacing:-1.94px;">STEP_OUTPUT</div>
<div class="t " style="left:1264.00px;top:1628.00px;font-size:23px;line-height:26px;font-family:'Liberation Mono', monospace;font-weight:normal;color:#221F1C;letter-spacing:-1.12px;">Yielded output "result" of type "Any". (Type check passed).</div>
<div class="t " style="left:3369.00px;top:1621.00px;font-size:23px;line-height:26px;font-family:'Liberation Mono', monospace;font-weight:normal;color:#A7A39C;letter-spacing:-1.12px;">14:43:12.229</div>
<div class="r" style="left:662px;top:1673px;width:298px;height:129px;background:#FDE1A1;"></div>
<div class="r" style="left:962px;top:1673px;width:2384px;height:129px;background:#FEF0D5;"></div>
<div class="r" style="left:3348px;top:1673px;width:226px;height:129px;background:#FDE1A1;"></div>
<div class="r" style="left:662px;top:1801px;width:2912px;height:2px;background:#E7E6E4;"></div>
<div class="t " style="left:684.00px;top:1687.00px;font-size:23px;line-height:26px;font-family:'Liberation Mono', monospace;font-weight:normal;color:#221F1C;letter-spacing:-1.3px;-webkit-text-stroke:0.6px #221F1C;">hello_logs</div>
<div class="r" style="left:970px;top:1681px;width:202.03999999999996px;height:48px;background:#F3F2F0;border-radius:15px;"></div>
<div class="t " style="left:987.00px;top:1695.00px;font-size:23px;line-height:26px;font-family:'Liberation Mono', monospace;font-weight:normal;color:#221F1C;letter-spacing:-1.94px;">HANDLED_OUTPUT</div>
<div class="t " style="left:1264.00px;top:1694.00px;font-size:23px;line-height:26px;font-family:'Liberation Mono', monospace;font-weight:normal;color:#221F1C;letter-spacing:-1.12px;">Handled output "result" using IO manager "io_manager"</div>
<div class="t " style="left:3369.00px;top:1687.00px;font-size:23px;line-height:26px;font-family:'Liberation Mono', monospace;font-weight:normal;color:#A7A39C;letter-spacing:-1.12px;">14:43:12.243</div>
<div class="r" style="left:662px;top:1802px;width:298px;height:65px;background:#FDE1A1;"></div>
<div class="r" style="left:962px;top:1802px;width:2384px;height:65px;background:#FEF0D5;"></div>
<div class="r" style="left:3348px;top:1802px;width:226px;height:65px;background:#FDE1A1;"></div>
<div class="r" style="left:662px;top:1866px;width:2912px;height:2px;background:#E7E6E4;"></div>
<div class="t " style="left:684.00px;top:1816.00px;font-size:23px;line-height:26px;font-family:'Liberation Mono', monospace;font-weight:normal;color:#221F1C;letter-spacing:-1.3px;-webkit-text-stroke:0.6px #221F1C;">hello_logs</div>
<div class="r" style="left:970px;top:1810px;width:178.31999999999994px;height:48px;background:#EAEFF3;border-radius:15px;"></div>
<div class="t " style="left:987.00px;top:1824.00px;font-size:23px;line-height:26px;font-family:'Liberation Mono', monospace;font-weight:normal;color:#3A8760;letter-spacing:-1.94px;">STEP_SUCCESS</div>
<div class="t " style="left:1264.00px;top:1823.00px;font-size:23px;line-height:26px;font-family:'Liberation Mono', monospace;font-weight:normal;color:#221F1C;letter-spacing:-1.12px;">Finished execution of step "hello_logs" in 25ms.</div>
<div class="t " style="left:3369.00px;top:1816.00px;font-size:23px;line-height:26px;font-family:'Liberation Mono', monospace;font-weight:normal;color:#A7A39C;letter-spacing:-1.12px;">14:43:12.247</div>
<div class="r" style="left:1266px;top:1731px;width:2055px;height:51px;background:#F5F4F2;border:2px solid #E6E4E0;box-sizing:border-box;"></div>
<div class="r" style="left:1350px;top:1733px;width:2px;height:47px;background:#E6E4E0;"></div>
<div class="t " style="left:1284.00px;top:1745.00px;font-size:23px;line-height:26px;font-family:'Liberation Mono', monospace;font-weight:normal;color:#A29E97;letter-spacing:-0.8px;">path</div>
<div class="t " style="left:1369.00px;top:1745.00px;font-size:23px;line-height:26px;font-family:'Liberation Mono', monospace;font-weight:normal;color:#221F1C;letter-spacing:-1.2px;text-decoration:underline;text-underline-offset:3px;text-decoration-thickness:2px;">/Users/erincochran/Desktop/asset_tutorial/my_dagster_project/tmpezr8itaa/storage/b8a77afc-ecaf-41fb-a258-e491ae1b0c15/hello_logs/result</div>
<svg class="r" style="left:3086px;top:1740px;" width="30" height="30" viewBox="0 0 24 24"><g fill="none" stroke="#736E66" stroke-width="2"><rect x="4.5" y="4.5" width="15" height="17" rx="1"/></g><rect x="9.5" y="2.5" width="5" height="3.5" rx="1" fill="#736E66"/><g fill="#736E66"><rect x="7.5" y="9" width="9" height="2"/><rect x="7.5" y="13" width="9" height="2"/><rect x="7.5" y="17" width="6" height="2"/></g></svg>
<div class="r" style="left:960px;top:1162px;width:2px;height:800px;background:#E7E6E4;"></div>
<div class="r" style="left:1240px;top:1162px;width:2px;height:800px;background:#E7E6E4;"></div>
<div class="r" style="left:3346px;top:1162px;width:2px;height:800px;background:#E7E6E4;"></div>
<svg class="r" style="left:0px;top:1942px;" width="24" height="20" viewBox="0 1942 24 20"><path d="M0,1954 C3,1957.5 10,1961 19.5,1962 L0,1962 Z" fill="#221F1C"/></svg>
<svg class="r" style="left:3550px;top:1942px;" width="24" height="20" viewBox="3550 1942 24 20"><path d="M3574,1955 C3571,1958 3565,1961 3556.5,1962 L3574,1962 Z" fill="#221F1C"/></svg>
</body></html>
